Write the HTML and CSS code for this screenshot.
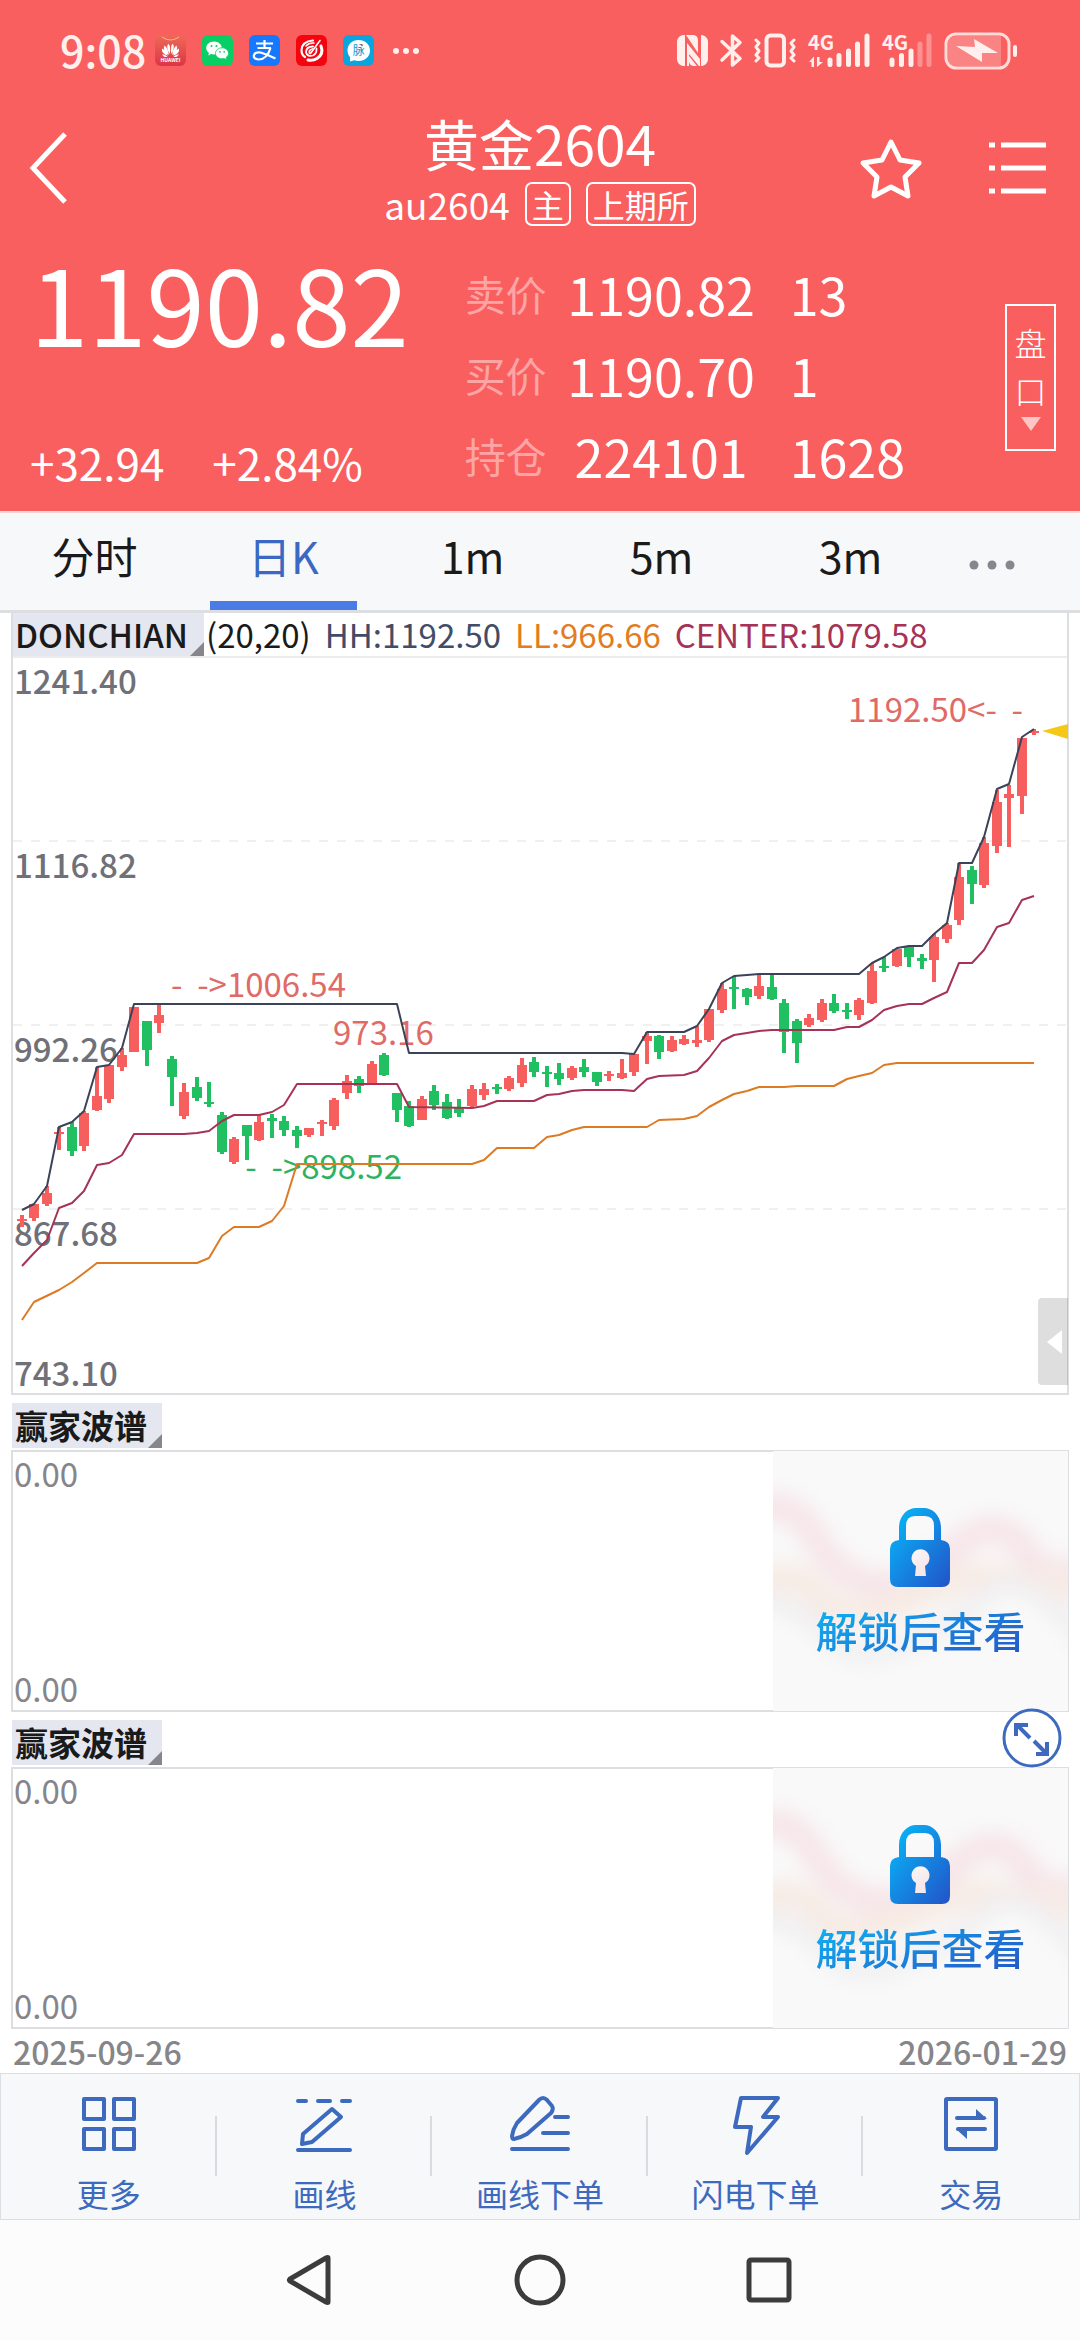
FILE: index.html
```html
<!DOCTYPE html>
<html lang="zh-CN">
<head>
<meta charset="utf-8">
<meta name="viewport" content="width=device-width, initial-scale=1">
<title>黄金2604</title>
<link rel="stylesheet" href="styles.css">
</head>
<body>
<header class="top">
  <div class="status">
    <span class="clock">9:08</span>
    <div class="apps">
      <svg width="31" height="31" viewBox="0 0 31 31" aria-hidden="true">
        <defs><linearGradient id="hw" x1="0" y1="0" x2="0" y2="1"><stop offset="0" stop-color="#ee6a55"/><stop offset="1" stop-color="#dc3548"/></linearGradient></defs>
        <rect width="31" height="31" rx="6" fill="url(#hw)"/>
        <path d="M7 2Q15.500 8 24 2" fill="none" stroke="#f9b59b" stroke-width="1"/>
        <g fill="#fff"><path d="M14.800 19Q10.500 12 13.300 8.800Q16 11 14.800 19zM16.200 19Q20.500 12 17.700 8.800Q15 11 16.200 19zM13.800 20Q7 15 9.500 10.500Q13 13 13.800 20zM17.200 20Q24 15 21.500 10.500Q18 13 17.200 20zM13 20.800Q6 18.500 7 13.500Q11 15.500 13 20.800zM18 20.800Q25 18.500 24 13.500Q20 15.500 18 20.800zM12.500 22Q8.500 22.500 7.200 19.200Q10.500 19.500 12.500 22zM18.500 22Q22.500 22.500 23.800 19.200Q20.500 19.500 18.500 22z"/></g>
        <text x="15.500" y="27" font-size="5" font-weight="700" text-anchor="middle" fill="#fff">HUAWEI</text>
      </svg>
      <svg width="31" height="31" viewBox="0 0 31 31" aria-hidden="true">
        <rect width="31" height="31" rx="6" fill="#07cf64"/>
        <path d="M12 6.500c-4.400 0-7.800 2.900-7.800 6.500 0 2 1.100 3.800 2.800 5l-.8 2.500 2.900-1.500c.9.300 1.900.5 2.900.5 4.400 0 7.800-2.900 7.800-6.500S16.400 6.500 12 6.500z" fill="#fff"/>
        <path d="M20 12.800c-3.600 0-6.500 2.500-6.500 5.500s2.900 5.500 6.500 5.500c.8 0 1.500-.1 2.200-.300l2.400 1.300-.6-2.100c1.500-1 2.500-2.600 2.500-4.400 0-3-2.900-5.500-6.500-5.500z" fill="#fff" stroke="#07cf64" stroke-width=".8"/>
        <g fill="#07cf64"><circle cx="9.500" cy="11" r="1"/><circle cx="14.500" cy="11" r="1"/><circle cx="18" cy="16.800" r=".9"/><circle cx="22.200" cy="16.800" r=".9"/></g>
      </svg>
      <svg width="31" height="31" viewBox="0 0 31 31" aria-hidden="true">
        <rect width="31" height="31" rx="6" fill="#1677ff"/>
        <g fill="none" stroke="#fff" stroke-width="2.200"><path d="M15.500 5v8M7 8.500h17M8.500 13h13.500"/><path d="M21.500 13Q18 24.500 9.500 24.500Q4.500 24 4.800 20.500Q6 16.500 11.500 17.500Q17 19 26.500 23.500"/></g>
      </svg>
      <svg width="31" height="31" viewBox="0 0 31 31" aria-hidden="true">
        <rect width="31" height="31" rx="6" fill="#f5040f"/>
        <g fill="none" stroke="#fff" stroke-linecap="round"><path d="M17 5.500Q6 6.500 5.500 15Q5.500 20 9 22" stroke-width="2.200"/><path d="M10 11Q13 7.500 18 8" stroke-width="1.500"/><path d="M25 11Q28 19 21 23.500Q17 26 12 25" stroke-width="3"/><path d="M24 5.500L14.500 18.500" stroke-width="1.600"/><path d="M17 11.500Q10.500 11.500 10 17Q11 22 17 20.500Q21 18.500 20.500 13.500M16.500 14Q12.500 15 13.500 18" stroke-width="1.800"/></g>
      </svg>
      <svg width="31" height="31" viewBox="0 0 31 31" aria-hidden="true">
        <rect width="31" height="31" rx="6" fill="#0aa5dc"/>
        <path d="M15.500 5C9 5 4.500 9.600 4.500 15.500c0 2.600 1 5 2.600 6.800L7 26.500l4.200-1.300c1.300.5 2.800.8 4.300.8C22 26 27 21.400 27 15.500S22 5 15.500 5z" fill="#fff"/>
        <text x="15.700" y="20" font-size="12" text-anchor="middle" fill="#0a9bd0">脉</text>
        <path d="M17 9h2.500v2z" fill="#e33"/>
      </svg>
      <svg class="dots" width="26" height="6" viewBox="0 0 26 6" aria-hidden="true"><circle cx="3" cy="3" r="3"/><circle cx="13" cy="3" r="3"/><circle cx="23" cy="3" r="3"/></svg>
    </div>
    <div class="signals">
      <svg width="31" height="33" viewBox="0 0 31 33" aria-hidden="true"><path d="M6 1h2v31H6q-5-1-6-6V7q1-5 6-6zM9 1h8q4 1 4 5v13zM10 9l13 16v7h-1L12 20v12h-2zM24 1h1q5 1 6 6v19q-1 5-6 6h-1zM12 22l8 10h-4q-4-1-4-5z"/></svg>
      <svg width="22" height="35" viewBox="0 0 22 35" aria-hidden="true"><path d="M2 8.500L20 25.500 12.500 32V3L20 9.500 2 27" fill="none" stroke="#fff0ee" stroke-width="3.500" stroke-linejoin="round" stroke-linecap="round"/></svg>
      <svg width="42" height="35" viewBox="0 0 42 35" aria-hidden="true"><g fill="none" stroke="#fff0ee" stroke-linejoin="round" stroke-linecap="round"><rect x="12.500" y="2.500" width="17.500" height="30" rx="4" stroke-width="4"/><path d="M2 7l3 3-3 4 3 4-3 4 3 3-3 3M40 7l-3 3 3 4-3 4 3 4-3 3 3 3" stroke-width="3"/></g></svg>
      <svg width="62" height="35" viewBox="0 0 62 35" aria-hidden="true"><text x="0" y="17" font-size="20" font-weight="700">4G</text><g fill="none" stroke="#fff0ee" stroke-width="5" stroke-linecap="round"><path d="M22 27v4.500M31 22.500v9M40.500 18v13.500M49.500 11v20.500M59 3v28.500"/></g><path d="M1 29l5-5.500V34H3.500v-5zM9 24h2.500v5H15l-6 5z"/></svg>
      <svg width="50" height="35" viewBox="0 0 50 35" aria-hidden="true"><text x="0" y="17" font-size="20" font-weight="700">4G</text><g fill="none" stroke="#fff0ee" stroke-width="5" stroke-linecap="round"><path d="M10 27v4.500M19.500 22.500v9M29 18v13.500"/><path d="M38 11v20.500M47 3v28.500" opacity=".35"/></g></svg>
      <svg width="74" height="38" viewBox="0 0 74 38" aria-hidden="true"><rect x="2" y="2" width="63" height="34" rx="10" fill="none" stroke="#ffdcd9" stroke-width="3"/><path d="M12 4h45v30H12q-8 0-8-8V12q0-8 8-8z" opacity=".25"/><path d="M12 14l19 1-1-8 24 14-16 0 0 9z"/><rect x="69" y="13" width="4" height="12" rx="2"/></svg>
    </div>
  </div>

  <div class="titlebar">
    <button class="icon-btn back" aria-label="返回"><svg width="40" height="74" viewBox="0 0 40 74"><path d="M37 3L5 37l32 34" fill="none" stroke="#fff" stroke-width="5"/></svg></button>
    <div class="title">
      <h1>黄金2604</h1>
      <div class="sub"><span class="code">au2604</span><span class="badge">主</span><span class="badge">上期所</span></div>
    </div>
    <div class="actions">
      <button class="icon-btn" aria-label="收藏"><svg width="62" height="62" viewBox="0 0 62 62"><path d="M31 5l9 18 19 3-14 14 3 19-17-9-17 9 3-19L3 26l19-3z" fill="none" stroke="#fff" stroke-width="5" stroke-linejoin="round"/></svg></button>
      <button class="icon-btn" aria-label="列表"><svg width="57" height="52" viewBox="0 0 57 52"><path d="M0 3h6M12 3h45M0 26h6M12 26h45M0 49h6M12 49h45" stroke="#fff" stroke-width="5"/></svg></button>
    </div>
  </div>

  <div class="quote">
    <div class="last">
      <strong class="price">1190.82</strong>
      <div class="change"><span>+32.94</span><span>+2.84%</span></div>
    </div>
    <table class="book">
      <tr><th scope="row">卖价</th><td class="val">1190.82</td><td>13</td></tr>
      <tr><th scope="row">买价</th><td class="val">1190.70</td><td>1</td></tr>
      <tr><th scope="row">持仓</th><td class="val">224101</td><td>1628</td></tr>
    </table>
    <button class="depth"><span>盘</span><span>口</span><svg width="20" height="14" viewBox="0 0 20 14" aria-hidden="true"><path d="M0 0h20L10 14z" fill="#fcc6c6"/></svg></button>
  </div>
</header>

<nav class="tabs">
  <button class="tab">分时</button>
  <button class="tab active">日K</button>
  <button class="tab">1m</button>
  <button class="tab">5m</button>
  <button class="tab">3m</button>
  <button class="tab more" aria-label="更多周期"><svg width="46" height="10" viewBox="0 0 46 10" fill="#86868e"><circle cx="5" cy="5" r="4.500"/><circle cx="23" cy="5" r="4.500"/><circle cx="41" cy="5" r="4.500"/></svg></button>
</nav>

<main class="charts">
  <section class="kline">
    <div class="legend">
      <button class="tag">DONCHIAN</button>
      <div class="values"><span>(20,20)</span><span class="hh">HH:1192.50</span><span class="ll">LL:966.66</span><span class="center">CENTER:1079.58</span></div>
    </div>
    <svg class="plot" viewBox="13 658 1054 735" role="img" aria-label="日K线图">
      <path class="grid" d="M13 841H1067M13 1025H1067M13 1209H1067"/>
      <g class="axis"><text x="14" y="694">1241.40</text><text x="14" y="878">1116.82</text><text x="14" y="1062">992.26</text><text x="14" y="1246">867.68</text><text x="14" y="1386">743.10</text></g>
      <path class="wick up" d="M22 1215V1227M34 1204V1221M47 1186V1206M59 1127V1150M84 1111V1151M97 1067V1111M109 1065V1103M122 1048V1071M159 1004V1033M184 1083V1119M234 1137V1164M259 1115V1141M309 1128V1137M322 1120V1136M334 1098V1130M347 1075V1099M372 1061V1084M422 1096V1120M472 1085V1107M484 1083V1100M509 1076V1091M522 1058V1087M572 1066V1080M609 1071V1081M622 1059V1079M634 1054V1076M647 1032V1064M672 1036V1052M684 1035V1045M697 1026V1047M709 1009V1042M722 983V1013M759 974V999M809 1014V1027M822 999V1022M859 998V1020M872 963V1004M897 949V967M934 934V982M947 923V943M959 863V925M984 837V888M997 790V853M1009 785V847M1022 738V814M1034 729V735"/>
      <path class="body up" d="M22 1219V1221M34 1204V1218M47 1193V1204M59 1132V1134M84 1113V1146M97 1096V1110M109 1065V1099M122 1055V1067M134 1007V1052M159 1015V1023M184 1092V1116M234 1139V1162M259 1122V1140M309 1128V1135M322 1122V1124M334 1100V1126M347 1081V1093M372 1064V1084M422 1099V1120M472 1089V1106M484 1089V1095M509 1078V1089M522 1065V1083M572 1068V1078M609 1074V1076M622 1073V1078M634 1054V1072M647 1036V1041M672 1040V1051M684 1039V1044M697 1040V1043M709 1009V1040M722 989V1010M759 986V996M809 1018V1025M822 1003V1020M859 1000V1015M872 971V1003M897 949V966M934 937V960M947 925V939M959 877V920M984 843V885M997 802V846M1009 794V798M1022 738V796M1034 731V733"/>
      <path class="wick down" d="M72 1122V1156M147 1021V1066M172 1056V1106M197 1077V1101M209 1082V1107M222 1112V1154M247 1125V1160M272 1114V1138M284 1116V1136M297 1126V1148M359 1076V1093M384 1053V1076M397 1093V1122M409 1101V1127M434 1085V1110M447 1094V1119M459 1099V1117M497 1084V1094M534 1057V1077M547 1066V1087M559 1063V1085M584 1059V1077M597 1072V1086M659 1035V1059M734 976V1009M747 988V1005M772 974V1000M784 999V1053M797 1019V1063M834 994V1013M847 1003V1019M884 957V972M909 946V967M922 954V969M972 866V904"/>
      <path class="body down" d="M72 1127V1151M147 1021V1050M172 1059V1077M197 1087V1098M209 1102V1104M222 1115V1152M247 1125V1136M272 1118V1121M284 1121V1130M297 1130V1136M359 1079V1086M384 1055V1075M397 1093V1110M409 1106V1126M434 1091V1105M447 1102V1118M459 1108V1113M497 1087V1089M534 1062V1072M547 1072V1074M559 1073V1079M584 1067V1072M597 1072V1082M659 1036V1052M734 987V989M747 989V997M772 987V999M784 1003V1032M797 1021V1043M834 1003V1011M847 1010V1012M884 966V968M909 947V957M922 958V961M972 870V884"/>
      <g class="mark"><text x="346" y="997" text-anchor="end">-&#160;&#160;-&gt;1006.54</text><text x="333" y="1045">973.16</text><text x="848" y="722">1192.50&lt;-&#160;&#160;-</text></g>
      <text class="mark low" x="402" y="1179" text-anchor="end">-&#160;&#160;-&gt;898.52</text>
      <polyline class="line hh" points="22,1210 34,1204 47,1186 59,1127 72,1122 84,1111 97,1067 109,1065 122,1048 134,1004 397,1004 409,1053 622,1053 634,1054 647,1032 684,1032 697,1026 709,1009 722,983 734,976 747,975 759,974 859,974 872,963 884,957 897,948 909,946 922,946 934,934 947,923 959,863 972,863 984,837 997,789 1009,784 1022,737 1034,729"/>
      <polyline class="line center" points="22,1266 34,1253 47,1240 59,1208 72,1203 84,1191 97,1165 109,1163 122,1155 134,1134 184,1134 197,1133 209,1131 222,1121 234,1115 259,1115 272,1112 284,1105 297,1084 397,1084 409,1107 472,1108 484,1106 497,1101 534,1101 547,1095 559,1094 572,1091 584,1090 622,1090 634,1091 647,1079 659,1076 684,1075 697,1071 709,1058 722,1041 734,1035 747,1033 759,1031 772,1030 834,1030 847,1027 859,1027 872,1020 884,1010 897,1006 909,1004 922,1004 934,998 947,992 959,963 972,963 984,950 997,927 1009,923 1022,900 1034,896"/>
      <polyline class="line ll" points="22,1320 34,1302 59,1290 72,1282 84,1273 97,1263 197,1263 209,1258 222,1236 234,1227 259,1227 272,1221 284,1206 297,1164 472,1164 484,1160 497,1148 534,1148 547,1137 559,1135 572,1130 584,1127 647,1127 659,1120 684,1119 697,1116 709,1107 722,1100 734,1094 747,1091 759,1087 784,1087 797,1086 834,1086 847,1079 859,1076 872,1073 884,1065 897,1063 1034,1063"/>
      <path d="M1042 731L1068 724V739z" fill="#f5c816"/>
    </svg>
    <button class="drawer" aria-label="展开侧栏"><svg width="15" height="24" viewBox="0 0 15 24"><path d="M15 0v24L0 12z" fill="#fff"/></svg></button>
  </section>

  <section class="indicator">
    <button class="tag">赢家波谱</button>
    <div class="panel">
      <div class="scale"><span>0.00</span><span>0.00</span></div>
      <button class="locked">
        <svg class="waves" viewBox="0 0 294 260" preserveAspectRatio="none" aria-hidden="true">
          <defs><filter id="soft" x="-20%" y="-20%" width="140%" height="140%"><feGaussianBlur stdDeviation="10"/></filter></defs>
          <g fill="none" stroke-width="28" filter="url(#soft)">
            <path d="M-30 64Q16 40 40 84T100 133T180 98T250 98T320 112" stroke="#f6e5e9"/>
            <path d="M-30 140Q16 110 45 144T133 150T213 125T320 140" stroke="#f7ebe4"/>
            <path d="M-30 150Q20 145 49 180T126 196T213 142T320 205" stroke="#f0eff1" stroke-width="18"/>
          </g>
        </svg>
        <svg class="lock" width="60" height="79" viewBox="0 0 60 79" aria-hidden="true">
          <defs><linearGradient id="lk" x1="0" y1="0" x2="1" y2="1"><stop offset="0" stop-color="#05bdfb"/><stop offset="1" stop-color="#2352c8"/></linearGradient></defs>
          <path fill="url(#lk)" fill-rule="evenodd" d="M9 32V20C9 7 18 0 26 0h8c8 0 17 7 17 20v12q9 1 9 9v30q0 8-8 8H8q-8 0-8-8V41q0-8 9-9zM16 32h28V18q0-10-9-10H25q-9 0-9 10zM25 68h11l-1-10a9 9 0 1 0-9 0z"/>
        </svg>
        <span class="unlock">解锁后查看</span>
      </button>
    </div>
  </section>

  <section class="indicator">
    <button class="tag">赢家波谱</button>
    <button class="expand" aria-label="全屏"><svg width="60" height="60" viewBox="0 0 60 60" fill="none" stroke="#3d6abf"><circle cx="30" cy="30" r="28" stroke-width="3"/><path d="M28 30L15 17M14 28V17h12M32 33l13 13M34 46h11V34" stroke-width="4"/></svg></button>
    <div class="panel">
      <div class="scale"><span>0.00</span><span>0.00</span></div>
      <button class="locked">
        <svg class="waves" viewBox="0 0 294 260" preserveAspectRatio="none" aria-hidden="true">
          <g fill="none" stroke-width="28" filter="url(#soft)">
            <path d="M-30 64Q16 40 40 84T100 133T180 98T250 98T320 112" stroke="#f6e5e9"/>
            <path d="M-30 140Q16 110 45 144T133 150T213 125T320 140" stroke="#f7ebe4"/>
            <path d="M-30 150Q20 145 49 180T126 196T213 142T320 205" stroke="#f0eff1" stroke-width="18"/>
          </g>
        </svg>
        <svg class="lock" width="60" height="79" viewBox="0 0 60 79" aria-hidden="true">
          <path fill="url(#lk)" fill-rule="evenodd" d="M9 32V20C9 7 18 0 26 0h8c8 0 17 7 17 20v12q9 1 9 9v30q0 8-8 8H8q-8 0-8-8V41q0-8 9-9zM16 32h28V18q0-10-9-10H25q-9 0-9 10zM25 68h11l-1-10a9 9 0 1 0-9 0z"/>
        </svg>
        <span class="unlock">解锁后查看</span>
      </button>
    </div>
  </section>
  <div class="dates"><time>2025-09-26</time><time>2026-01-29</time></div>
</main>

<footer class="toolbar">
  <button class="tool"><svg width="60" height="62" viewBox="0 0 60 62"><path d="M5 5h20v20H5zM35 5h20v20H35zM5 35h20v20H5zM35 35h20v20H35z"/></svg><span>更多</span></button>
  <button class="tool"><svg width="60" height="62" viewBox="0 0 60 62"><path d="M4 7h8M24 7h12M48 7h8M4 56h52M8 50l1-10L38 15l9 8-29 25z"/></svg><span>画线</span></button>
  <button class="tool"><svg width="60" height="62" viewBox="0 0 60 62"><path d="M2 42Q3 35 7 29L29 6q4-4 8 0l5 6q2 3-1 7L17 40Q10 44 4 45 2 45 2 42zM45 23h13M33 39h25M2 55h56"/></svg><span>画线下单</span></button>
  <button class="tool"><svg width="60" height="62" viewBox="0 0 60 62"><path d="M15 4h37L37 23h15L21 59l4-26H9z"/></svg><span>闪电下单</span></button>
  <button class="tool"><svg width="60" height="62" viewBox="0 0 60 62"><rect x="5" y="5" width="50" height="50" rx="1"/><path d="M16 24h27M17 35h27" /><path d="M35 15l11 10H35zM15 35h11v10z" stroke="none" fill="#3d6abf"/></svg><span>交易</span></button>
</footer>

<nav class="system">
  <button class="icon-btn" aria-label="返回"><svg width="50" height="54" viewBox="0 0 50 54"><path d="M42 5v44q0 1-2 0L4 28q-1-1 0-2L40 5q2-1 2 0z"/></svg></button>
  <button class="icon-btn" aria-label="主屏幕"><svg width="50" height="54" viewBox="0 0 50 54"><circle cx="25" cy="27" r="23"/></svg></button>
  <button class="icon-btn" aria-label="最近任务"><svg width="50" height="54" viewBox="0 0 50 54"><rect x="5" y="7" width="40" height="40" rx="2"/></svg></button>
</nav>
</body>
</html>
```
FILE: styles.css
```css
:root {
  --red: #f95f5f;
  --blue: #3d6abf;
  --line: #dcdee2;
  --mist: #f7f8f9;
  --pale: #fff0ee;
}

* { box-sizing: border-box; }

body {
  margin: 0;
  background: #fff;
  color: #1a1a1a;
  font-family: "Noto Sans CJK SC", "Noto Sans", sans-serif;
  font-size: 33px;
}

button {
  margin: 0;
  padding: 0;
  border: 0;
  background: none;
  color: inherit;
  font: inherit;
}

svg { display: block; flex: none; overflow: visible; }

/* header */
.top { background: var(--red); color: #fff; }

.status {
  display: flex;
  align-items: center;
  height: 101px;
  padding: 0 62px 0 60px;
}
.clock {
  width: 95px;
  padding-bottom: 4px;
  color: var(--pale);
  font-size: 43px;
  font-weight: 500;
  line-height: 56px;
}
.apps { display: flex; align-items: center; gap: 16px; }
.dots { margin-left: 3px; fill: var(--pale); }
.signals {
  display: flex;
  align-items: center;
  gap: 12px;
  margin-left: auto;
  fill: var(--pale);
}

.titlebar {
  display: grid;
  grid-template-columns: 1fr auto 1fr;
  align-items: center;
  padding: 0 34px;
}
.back { justify-self: start; margin-left: -6px; }
.title { padding: 6px 0 9px; text-align: center; }
.title h1 { margin: 0; font-size: 55px; font-weight: 400; line-height: 70px; }
.sub {
  display: flex;
  align-items: center;
  justify-content: center;
  gap: 15px;
  margin-top: 5px;
}
.code { font-size: 37px; line-height: 44px; }
.badge {
  padding: 0 5px;
  border: 2px solid #fff;
  border-radius: 7px;
  font-size: 32px;
  line-height: 40px;
}
.actions { display: flex; align-items: center; justify-content: flex-end; gap: 67px; }

.quote {
  display: grid;
  grid-template-columns: 44% 1fr auto;
  padding-right: 24px;
}
.last {
  display: flex;
  flex-direction: column;
  justify-content: space-between;
  padding: 6px 0 19px 30px;
}
.price { font-size: 105px; font-weight: 400; line-height: 120px; }
.change { display: flex; gap: 48px; font-size: 44px; line-height: 60px; }
.book {
  justify-self: start;
  margin: 18px 0 15px;
  border-collapse: collapse;
  font-size: 52px;
  line-height: 81px;
}
.book th, .book td { padding: 0; font-weight: 400; text-align: left; }
.book th { width: 101px; color: #fda5a5; font-size: 41px; }
.book .val { width: 224px; padding-right: 33px; text-align: center; }
.depth {
  display: flex;
  flex-direction: column;
  align-items: center;
  align-self: center;
  width: 51px;
  margin-top: 9px;
  padding: 12px 0 18px;
  border: 2px solid #fff;
  font-size: 32px;
  font-weight: 300;
  line-height: 48px;
}
.depth svg { margin-top: 3px; }

/* period tabs */
.tabs {
  display: grid;
  grid-template-columns: repeat(5, 7fr) 5fr;
  border-top: 2px solid #fbd5d5;
  border-bottom: 3px solid var(--line);
  background: var(--mist);
}
.tab {
  position: relative;
  padding: 12px 0 25px;
  font-size: 43px;
  line-height: 60px;
}
.tab.active { color: #3a68c2; }
.tab.active::after {
  content: "";
  position: absolute;
  bottom: 0;
  left: 11%;
  right: 11%;
  height: 9px;
  background: #4b7be5;
}
.tab.more {
  display: flex;
  align-items: center;
  justify-content: center;
  padding: 6px 41px 0 0;
}

/* charts */
.charts { padding: 0 11px; }

.tag {
  position: relative;
  padding: 0 16px 0 2px;
  background: #e4e6f0;
  font-weight: 500;
  line-height: 43px;
  text-align: left;
  white-space: nowrap;
}
.tag::after {
  content: "";
  position: absolute;
  right: 0;
  bottom: 0;
  border-bottom: 14px solid #86868c;
  border-left: 14px solid transparent;
}

.kline {
  position: relative;
  border: solid var(--line);
  border-width: 0 2px 2px;
}
.legend { display: flex; border-bottom: 2px solid #ececee; }
.legend .tag { width: 191px; }
.values {
  display: flex;
  gap: 14px;
  padding-left: 2px;
  line-height: 43px;
  white-space: nowrap;
}
.values .hh { color: #434c66; }
.values .ll { color: #e17c22; }
.values .center { color: #a63356; }

.plot { width: 100%; height: auto; }
.grid { stroke: #f0f0f1; stroke-width: 2; stroke-dasharray: 9 9; }
.axis { fill: #707078; font-weight: 500; }
.mark { fill: #e06a66; }
.mark.low { fill: #2db35f; }
.wick { stroke-width: 4; }
.body { stroke-width: 10; }
.up { stroke: #f75f5f; }
.down { stroke: #20bf62; }
.line { fill: none; stroke-width: 2; stroke-linejoin: round; }
.line.hh { stroke: #3a4358; }
.line.center { stroke: #a63356; }
.line.ll { stroke: #dd7a24; }

.drawer {
  display: flex;
  align-items: center;
  position: absolute;
  right: -1px;
  bottom: 8px;
  width: 30px;
  height: 87px;
  padding-left: 9px;
  border-radius: 4px 0 0 4px;
  background: rgba(0, 0, 0, .13);
}

.indicator { position: relative; padding-top: 8px; }
.indicator .tag {
  display: block;
  width: 150px;
  margin: 0 0 2px 1px;
  padding-left: 3px;
  font-weight: 700;
  line-height: 45px;
}
.panel {
  display: flex;
  justify-content: space-between;
  border: 2px solid var(--line);
}
.scale {
  display: flex;
  flex-direction: column;
  justify-content: space-between;
  padding: 1px 0 2px 1px;
  color: #85858b;
  line-height: 40px;
}
.locked {
  display: flex;
  flex: 0 0 28%;
  flex-direction: column;
  align-items: center;
  position: relative;
  margin: -1px -1px -1px 0;
  padding: 57px 0 56px;
  background: #f9f9f9;
}
.waves { position: absolute; inset: 0; width: 100%; height: 100%; overflow: hidden; }
.lock { position: relative; }
.unlock {
  position: relative;
  margin-top: 18px;
  background: linear-gradient(160deg, #10b5f4, #2456c6);
  background-clip: text;
  -webkit-background-clip: text;
  color: transparent;
  font-size: 42px;
  font-weight: 500;
  line-height: 50px;
}
.expand {
  position: absolute;
  top: -4px;
  right: 7px;
  z-index: 1;
  border-radius: 50%;
  background: #fff;
}

.dates {
  display: flex;
  justify-content: space-between;
  padding: 1px 2px;
  color: #85858a;
  font-size: 32px;
  font-weight: 500;
  line-height: 42px;
}

/* bottom toolbar */
.toolbar {
  display: flex;
  border: 1px solid var(--line);
  background: var(--mist);
}
.tool {
  display: flex;
  flex: 1;
  flex-direction: column;
  align-items: center;
  padding: 20px 0 6px;
  background: linear-gradient(#d9dbdf, #d9dbdf) right 42px / 2px 60px no-repeat;
  color: var(--blue);
  font-size: 32px;
  line-height: 40px;
}
.tool:last-child { background: none; }
.tool svg {
  margin-bottom: 17px;
  fill: none;
  stroke: var(--blue);
  stroke-width: 4;
  stroke-linecap: round;
  stroke-linejoin: round;
}

/* system navigation */
.system {
  display: flex;
  justify-content: center;
  gap: 179px;
  padding: 33px 0;
  background: #fcfcfc;
}
.system svg { fill: none; stroke: #3c3c3c; stroke-width: 5; }
```
